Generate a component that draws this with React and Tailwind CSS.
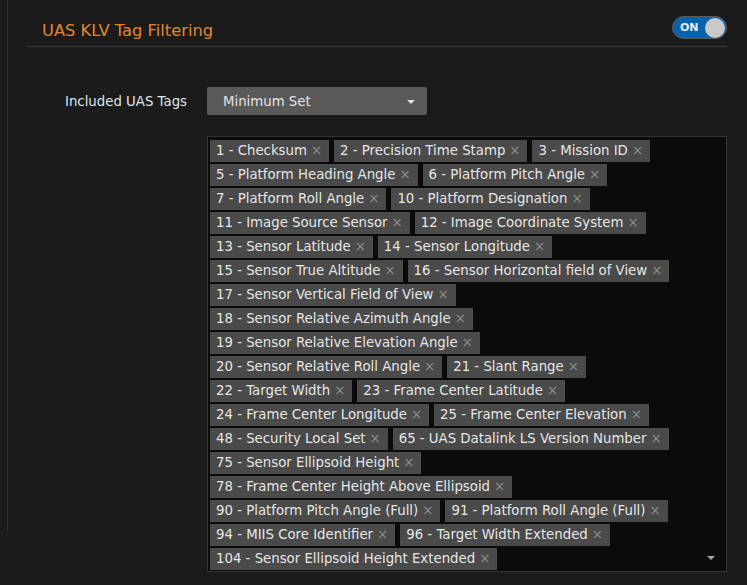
import React from "react";

const tags = [
    "1 - Checksum",
    "2 - Precision Time Stamp",
    "3 - Mission ID",
    "5 - Platform Heading Angle",
    "6 - Platform Pitch Angle",
    "7 - Platform Roll Angle",
    "10 - Platform Designation",
    "11 - Image Source Sensor",
    "12 - Image Coordinate System",
    "13 - Sensor Latitude",
    "14 - Sensor Longitude",
    "15 - Sensor True Altitude",
    "16 - Sensor Horizontal field of View",
    "17 - Sensor Vertical Field of View",
    "18 - Sensor Relative Azimuth Angle",
    "19 - Sensor Relative Elevation Angle",
    "20 - Sensor Relative Roll Angle",
    "21 - Slant Range",
    "22 - Target Width",
    "23 - Frame Center Latitude",
    "24 - Frame Center Longitude",
    "25 - Frame Center Elevation",
    "48 - Security Local Set",
    "65 - UAS Datalink LS Version Number",
    "75 - Sensor Ellipsoid Height",
    "78 - Frame Center Height Above Ellipsoid",
    "90 - Platform Pitch Angle (Full)",
    "91 - Platform Roll Angle (Full)",
    "94 - MIIS Core Identifier",
    "96 - Target Width Extended",
    "104 - Sensor Ellipsoid Height Extended",
];

const Tag = ({ label }) => (
    <div className="flex items-center h-[22px] pl-[6px] pr-[7px] bg-[#4a4a4a] text-[#e6e6e6] whitespace-nowrap">
        <span>{label}</span>
        <span className="ml-[4px] text-[#8e8e8e]">×</span>
    </div>
);

export default function App() {
    return (
        <div
            className="flex w-full h-[585px] overflow-hidden bg-[#1b1b1b] text-[13.3px] leading-none"
            style={{ fontFamily: '"DejaVu Sans", Verdana, sans-serif' }}
        >
            <div className="ml-[7px] w-px h-[531px] shrink-0 bg-[#303030]" />

            <div className="flex-1 flex flex-col">
                {/* header */}
                <div className="ml-[19px] mr-[20px] h-[47px] flex items-start justify-between border-b border-[#3c3c3c]">
                    <h2 className="mt-[19px] pl-[15px] text-[16.3px] leading-6 text-[#e2862e]">
                        UAS KLV Tag Filtering
                    </h2>

                    <div className="mt-4 w-[55px] h-[23px] rounded-full bg-[#0b62ab] border border-[#5a5a5a] flex items-center justify-between pl-[7px] pr-px">
                        <span className="text-[11px] font-bold text-[#e4ecf4]">ON</span>
                        <span className="w-[20px] h-[20px] rounded-full bg-[#c8c8c8]" />
                    </div>
                </div>

                {/* select row */}
                <div className="mt-[40px] flex items-center pl-[57px]">
                    <label className="w-[142px] pt-[2px] text-[#dfe5ec]">Included UAS Tags</label>
                    <div className="w-[220px] h-[28px] rounded-[2px] bg-[#595959] flex items-center justify-between pt-[2px] pl-[16px] pr-[12px] text-[#e4e4e4]">
                        <span>Minimum Set</span>
                        <span className="w-0 h-0 border-x-[4px] border-x-transparent border-t-[4px] border-t-[#e0e0e0]" />
                    </div>
                </div>

                {/* tags box */}
                <div className="mt-[21px] ml-[199px] w-[520px] h-[436px] relative border border-[#333] bg-[#0b0b0b] overflow-hidden">
                    <div className="flex flex-wrap content-start gap-x-[5px] gap-y-[2px] pt-[3px] pl-[2px] pr-[28px]">
                        {tags.map((t) => (
                            <Tag key={t} label={t} />
                        ))}
                    </div>
                    <span className="absolute right-[11px] bottom-[11px] w-0 h-0 border-x-[4px] border-x-transparent border-t-[4px] border-t-[#a8a8a8]" />
                </div>
            </div>
        </div>
    );
}
